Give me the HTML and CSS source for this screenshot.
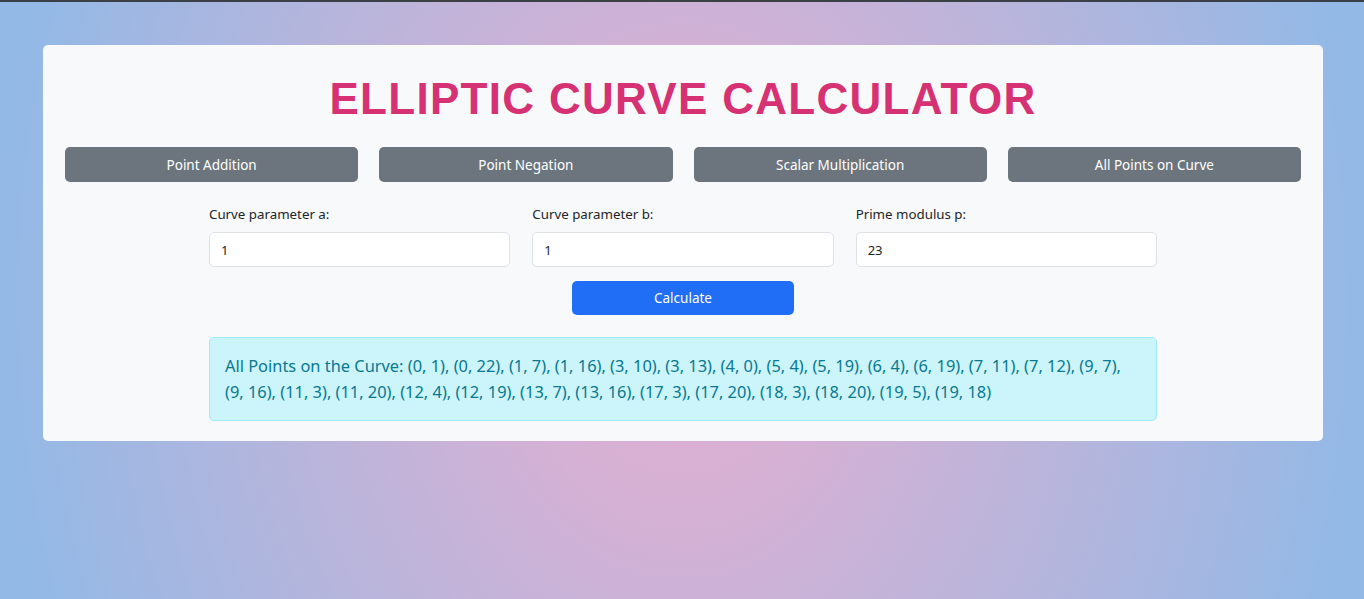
FILE: index.html
```html
<!DOCTYPE html>
<html lang="en">
<head>
<meta charset="utf-8">
<title>Elliptic Curve Calculator</title>
<link rel="stylesheet" href="styles.css">
</head>
<body>
<div class="topline"></div>
<main class="card">
  <h1 class="title">ELLIPTIC CURVE CALCULATOR</h1>
  <nav class="tabs">
    <button class="tab">Point Addition</button>
    <button class="tab">Point Negation</button>
    <button class="tab">Scalar Multiplication</button>
    <button class="tab">All Points on Curve</button>
  </nav>
  <section class="form">
    <div class="fields">
      <label class="field">
        <span class="label">Curve parameter a:</span>
        <input class="input" type="text" value="1">
      </label>
      <label class="field">
        <span class="label">Curve parameter b:</span>
        <input class="input" type="text" value="1">
      </label>
      <label class="field">
        <span class="label">Prime modulus p:</span>
        <input class="input" type="text" value="23">
      </label>
    </div>
    <div class="actions">
      <button class="calc">Calculate</button>
    </div>
    <div class="result">All Points on the Curve: (0, 1), (0, 22), (1, 7), (1, 16), (3, 10), (3, 13), (4, 0), (5, 4), (5, 19), (6, 4), (6, 19), (7, 11), (7, 12), (9, 7), (9, 16), (11, 3), (11, 20), (12, 4), (12, 19), (13, 7), (13, 16), (17, 3), (17, 20), (18, 3), (18, 20), (19, 5), (19, 18)</div>
  </section>
</main>
</body>
</html>
```
FILE: styles.css
```css
html, body {
  margin: 0;
  padding: 0;
  height: 100%;
}
body {
  font-family: "Noto Sans", "Open Sans", sans-serif;
  background: radial-gradient(ellipse 682px 900px at 50% 50%, #e2afcf 0%, #d4b1d5 25%, #b6b5dc 60%, #93b9e6 100%);
  background-attachment: fixed;
  overflow: hidden;
}
.topline {
  height: 2px;
  background: #3b3f46;
}
.card {
  margin: 43px 41px 0 43px;
  background: #f8f9fa;
  border-radius: 5px;
  padding: 22px 22px 20px;
}
.title {
  margin: 0;
  padding-top: 5px;
  text-align: center;
  font-family: "Liberation Sans", Arial, sans-serif;
  font-weight: 700;
  font-size: 44px;
  line-height: 54px;
  letter-spacing: 1.3px;
  color: #d63172;
}
.tabs {
  display: grid;
  grid-template-columns: repeat(4, 1fr);
  column-gap: 21px;
  margin-top: 21px;
}
.tab {
  height: 35px;
  border: none;
  border-radius: 5px;
  background: #6c757d;
  color: #ffffff;
  font-family: inherit;
  font-size: 13.5px;
  cursor: pointer;
}
.form {
  width: 948px;
  margin: 23px auto 0;
}
.fields {
  display: grid;
  grid-template-columns: repeat(3, 1fr);
  column-gap: 22px;
}
.field {
  display: flex;
  flex-direction: column;
}
.label {
  font-size: 13.3px;
  color: #212529;
  line-height: 18px;
  margin-bottom: 9px;
}
.input {
  box-sizing: border-box;
  height: 35px;
  border: 1px solid #dee2e6;
  border-radius: 5px;
  background: #ffffff;
  padding: 0 11px;
  font-family: inherit;
  font-size: 13px;
  color: #212529;
}
.actions {
  display: flex;
  justify-content: center;
  margin-top: 14px;
}
.calc {
  width: 222px;
  height: 34px;
  border: none;
  border-radius: 5px;
  background: #1f6ef5;
  color: #ffffff;
  font-family: inherit;
  font-size: 13.5px;
  cursor: pointer;
}
.result {
  margin-top: 22px;
  background: #cbf4fb;
  border: 1px solid #9eeaf9;
  border-radius: 5px;
  padding: 15px 15px 15px;
  color: #087990;
  font-size: 16.4px;
  line-height: 26px;
}
```
